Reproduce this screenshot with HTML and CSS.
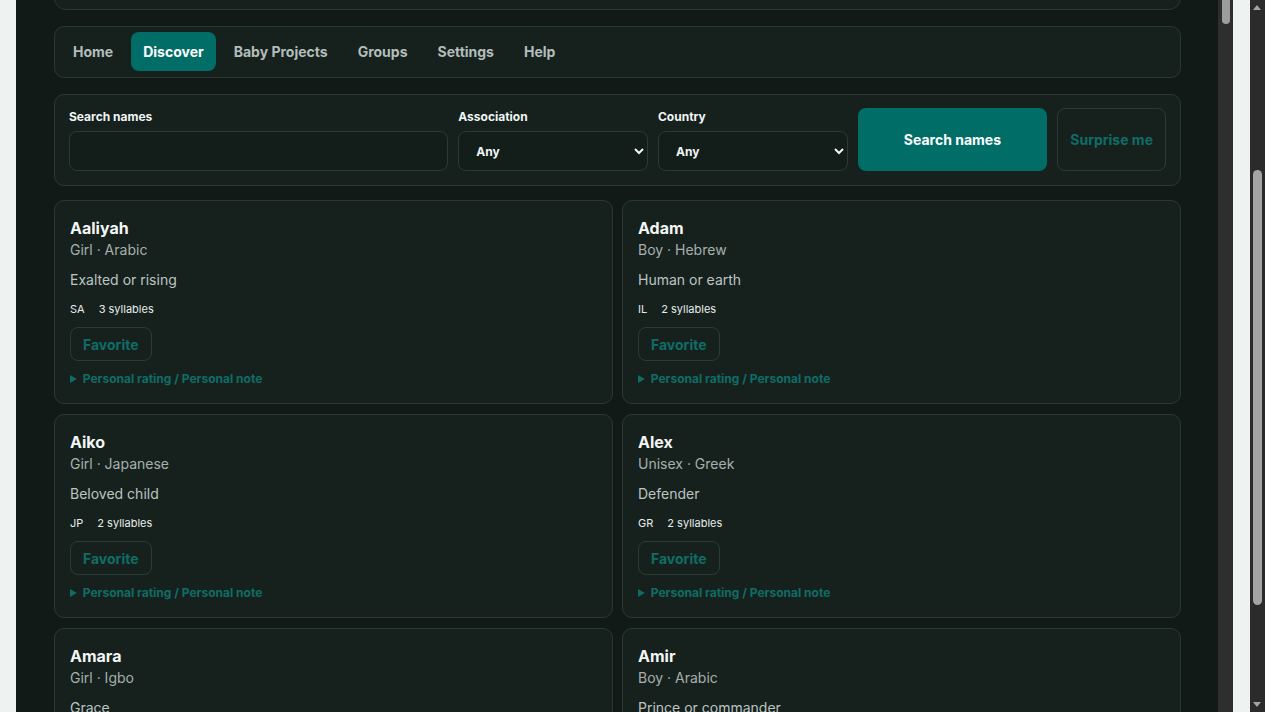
FILE: index.html
```html
<!DOCTYPE html>
<html lang="en">
<head>
    <meta charset="UTF-8">
    <meta name="viewport" content="width=device-width, initial-scale=1.0">
    <title>Baby Names</title>
    <link rel="stylesheet" href="styles.css">
</head>
<body>
    <div class="app">
        <header class="page-header">
            <h1>Baby Names</h1>
            <p>Find, compare and share names with your family.</p>
        </header>

        <nav class="tabs">
            <a href="#" class="tab">Home</a>
            <a href="#" class="tab active">Discover</a>
            <a href="#" class="tab">Baby Projects</a>
            <a href="#" class="tab">Groups</a>
            <a href="#" class="tab">Settings</a>
            <a href="#" class="tab">Help</a>
        </nav>

        <form class="search-panel">
            <label class="field">
                <span class="field-label">Search names</span>
                <input type="text" class="control">
            </label>
            <label class="field">
                <span class="field-label">Association</span>
                <select class="control">
                    <option>Any</option>
                </select>
            </label>
            <label class="field">
                <span class="field-label">Country</span>
                <select class="control">
                    <option>Any</option>
                </select>
            </label>
            <button type="submit" class="btn-primary">Search names</button>
            <button type="button" class="btn-ghost">Surprise me</button>
        </form>

        <div class="name-grid" id="results"></div>
    </div>

    <!-- scrollbars -->
    <div class="scrollbar scrollbar-app"><span class="thumb"></span></div>
    <div class="scrollbar scrollbar-page">
        <span class="arrow arrow-up"></span>
        <span class="thumb"></span>
        <span class="arrow arrow-down"></span>
    </div>

    <script>
        // liste des prénoms
        const names = [
            ['Aaliyah', 'Girl', 'Arabic', 'Exalted or rising', 'SA', 3],
            ['Adam', 'Boy', 'Hebrew', 'Human or earth', 'IL', 2],
            ['Aiko', 'Girl', 'Japanese', 'Beloved child', 'JP', 2],
            ['Alex', 'Unisex', 'Greek', 'Defender', 'GR', 2],
            ['Amara', 'Girl', 'Igbo', 'Grace', 'NG', 3],
            ['Amir', 'Boy', 'Arabic', 'Prince or commander', 'SA', 2],
            ['Ananya', 'Girl', 'Sanskrit', 'Unique', 'IN', 3],
            ['Anders', 'Boy', 'Scandinavian', 'Manly', 'SE', 2],
            ['Aria', 'Girl', 'Italian', 'Air or melody', 'IT', 3],
            ['Arjun', 'Boy', 'Sanskrit', 'Bright, shining', 'IN', 2],
            ['Astrid', 'Girl', 'Norse', 'Divinely beautiful', 'NO', 2],
            ['Ava', 'Girl', 'Latin', 'Bird', 'IT', 2],
            ['Axel', 'Boy', 'Scandinavian', 'Father of peace', 'SE', 2],
            ['Bella', 'Girl', 'Italian', 'Beautiful', 'IT', 2],
            ['Benjamin', 'Boy', 'Hebrew', 'Son of the right hand', 'IL', 3],
            ['Carmen', 'Girl', 'Spanish', 'Song', 'ES', 2]
        ];

        const results = document.getElementById('results');

        names.forEach(([name, gender, origin, meaning, country, syllables]) => {
            const card = document.createElement('article');
            card.className = 'name-card';
            card.innerHTML = `
                <h2 class="name">${name}</h2>
                <div class="origin">${gender} · ${origin}</div>
                <p class="meaning">${meaning}</p>
                <div class="meta"><span>${country}</span><span>${syllables} syllables</span></div>
                <button type="button" class="btn-fav">Favorite</button>
                <details class="notes"><summary>Personal rating / Personal note</summary></details>
            `;
            results.appendChild(card);
        });

        // position de défilement
        const tabs = document.querySelector('.tabs');
        window.scrollTo(0, tabs.getBoundingClientRect().top - 26);
    </script>
</body>
</html>
```

FILE: styles.css
```css
* {
    margin: 0;
    padding: 0;
    box-sizing: border-box;
}

:root {
    color-scheme: dark;
}

body {
    background: #eef2f1;
    padding: 16px 32px 16px 16px;
    font-family: 'Inter', 'Noto Sans', sans-serif;
    color: #f1f5f4;
}

.app {
    background: #111a17;
    height: 1084px;
    overflow-y: auto;
    padding: 24px 52px 24px 38px;
}

.page-header {
    background: #16211e;
    border: 1px solid #2a3834;
    border-radius: 12px;
    height: 222px;
    padding: 28px 24px;
    margin-bottom: 16px;
}

.page-header h1 {
    font-size: 28px;
    margin-bottom: 8px;
}

.page-header p {
    color: #a6b0ad;
    font-size: 15px;
}

.tabs {
    display: flex;
    gap: 6px;
    padding: 5px 6px 6px;
    background: #16211e;
    border: 1px solid #2a3834;
    border-radius: 10px;
    margin-bottom: 16px;
}

.tab {
    display: flex;
    align-items: center;
    height: 39px;
    padding: 0 12px;
    border-radius: 8px;
    color: #b3bdb9;
    font-size: 14px;
    font-weight: 700;
    text-decoration: none;
}

.tab.active {
    background: #006e67;
    color: #ffffff;
}

.search-panel {
    display: grid;
    grid-template-columns: 2fr 1fr 1fr 1fr auto;
    gap: 10px;
    padding: 13px 14px 14px;
    background: #16211e;
    border: 1px solid #2a3834;
    border-radius: 10px;
    margin-bottom: 14px;
}

.field {
    display: flex;
    flex-direction: column;
}

.field-label {
    font-size: 12px;
    font-weight: 700;
    line-height: 16px;
    margin: 1px 0 6px;
    color: #f1f5f4;
}

.control {
    height: 40px;
    background: #131d1a;
    border: 1px solid #2c3a36;
    border-radius: 8px;
    color: #f1f5f4;
    font-family: inherit;
    font-size: 12px;
    font-weight: 700;
    padding: 0 8px 0 13px;
}

.btn-primary,
.btn-ghost {
    border-radius: 8px;
    font-family: inherit;
    font-size: 14px;
    font-weight: 700;
    cursor: pointer;
}

.btn-primary {
    background: #006e67;
    border: none;
    color: #ffffff;
}

.btn-ghost {
    background: transparent;
    border: 1px solid #2c3a36;
    color: #0f6d66;
    padding: 0 12px;
}

.name-grid {
    display: grid;
    grid-template-columns: 1fr 1fr;
    gap: 10px 9px;
}

.name-card {
    background: #16211e;
    border: 1px solid #2a3834;
    border-radius: 10px;
    padding: 15px 15px 16px;
}

.name {
    font-size: 16px;
    font-weight: 700;
    line-height: 24px;
    color: #f3f6f5;
}

.origin {
    font-size: 14px;
    line-height: 20px;
    color: #a6b0ad;
}

.meaning {
    font-size: 14px;
    line-height: 20px;
    margin-top: 10px;
    color: #bcc5c2;
}

.meta {
    display: flex;
    gap: 14px;
    font-size: 11px;
    line-height: 16px;
    margin-top: 11px;
    color: #e8eceb;
}

.btn-fav {
    display: block;
    margin-top: 10px;
    height: 34px;
    padding: 0 12px;
    background: transparent;
    border: 1px solid #2c3a36;
    border-radius: 8px;
    color: #0f6d66;
    font-family: inherit;
    font-size: 14px;
    font-weight: 700;
    cursor: pointer;
}

.notes {
    margin-top: 10px;
}

.notes summary {
    font-size: 12px;
    font-weight: 700;
    line-height: 16px;
    color: #0f6d66;
    cursor: pointer;
}

/* scrollbars */
.scrollbar {
    position: fixed;
    top: 0;
    width: 15px;
    height: 100vh;
    background: #2e2e2e;
}

.scrollbar-app {
    left: 1218px;
}

.scrollbar-page {
    right: 0;
    background: #2b2b2b;
}

.scrollbar .thumb {
    position: absolute;
    left: 3px;
    width: 9px;
    border-radius: 5px;
    background: #9d9d9d;
}

.scrollbar-app .thumb {
    left: 4px;
    width: 8px;
    top: -20px;
    height: 44px;
}

.scrollbar-page .thumb {
    top: 170px;
    height: 435px;
    background: #a5a5a5;
}

.arrow {
    position: absolute;
    left: 3px;
    width: 0;
    height: 0;
    border-left: 4.5px solid transparent;
    border-right: 4.5px solid transparent;
}

.arrow-up {
    top: 5px;
    border-bottom: 5px solid #a5a5a5;
}

.arrow-down {
    bottom: 5px;
    border-top: 5px solid #a5a5a5;
}
```
